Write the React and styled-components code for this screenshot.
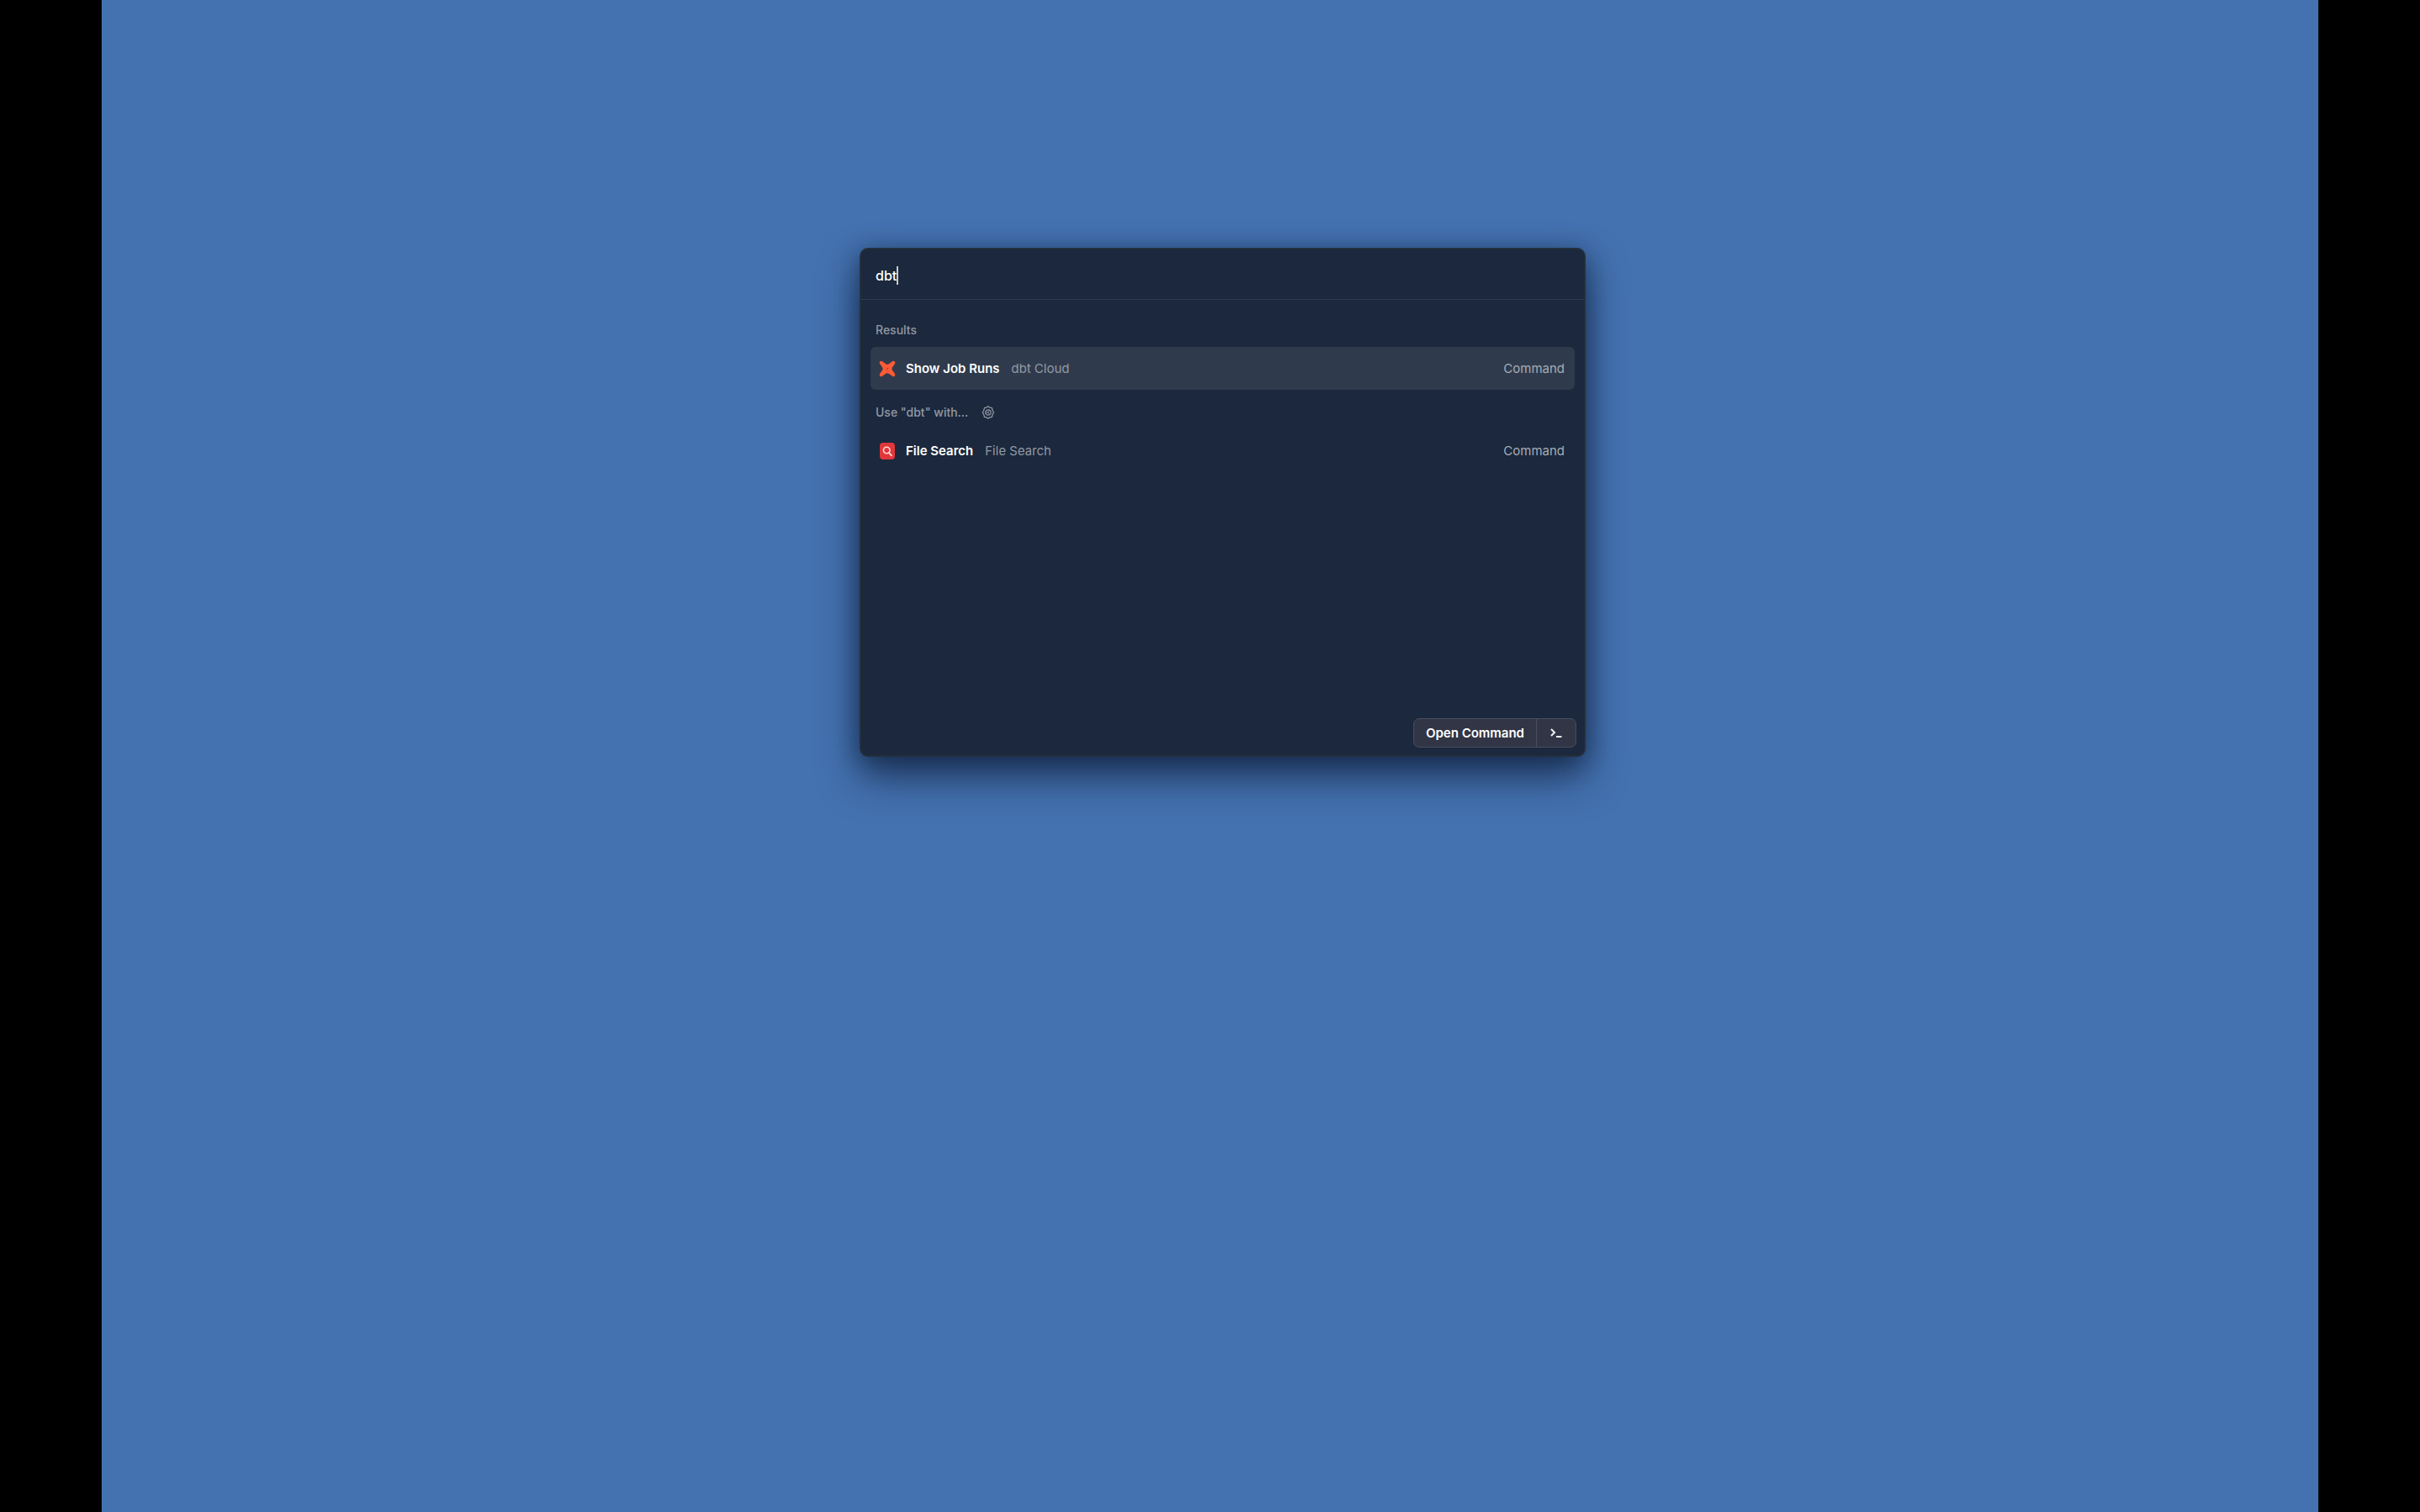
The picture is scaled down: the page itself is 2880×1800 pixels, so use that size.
import React, { useState } from 'react';
import styled, { createGlobalStyle } from 'styled-components';

const GlobalStyle = createGlobalStyle`
  * { box-sizing: border-box; }
  body {
    margin: 0;
    background: #000;
    font-family: Inter, Roboto, "Liberation Sans", sans-serif;
    font-size: 15px;
    line-height: 24px;
  }
  button, input { font: inherit; color: inherit; border: 0; background: none; padding: 0; }
`;

const Screen = styled.div`
  min-height: 100vh;
  padding: 0 121px;
  display: flex;
`;

const Desktop = styled.main`
  flex: 1;
  display: flex;
  justify-content: center;
  align-items: flex-start;
  padding: 295px 0 0 30px;
  background: #4472b0;
`;

const Launcher = styled.section`
  width: 30vw;
  min-height: 606px;
  display: flex;
  flex-direction: column;
  border-radius: 10px;
  border: 2px solid #242f3c;
  background: #1b283d;
  color: #fff;
  overflow: hidden;
  box-shadow: 0 24px 48px rgba(8, 20, 44, 0.62), 0 4px 28px rgba(8, 20, 44, 0.4);
`;

const SearchBar = styled.label`
  display: flex;
  align-items: center;
  height: 60px;
  padding: 2px 17px 0;
  border-bottom: 1px solid #303c4c;
`;

const SearchInput = styled.input`
  field-sizing: content;
  font-size: 16px;
  font-weight: 500;
  outline: none;
  caret-color: transparent;
`;

const Caret = styled.span`
  width: 2px;
  height: 22px;
  background: #c5cad2;
`;

const Results = styled.div`
  flex: 1;
  padding: 9px 11px 0;
`;

const GroupTitle = styled.h2`
  display: flex;
  align-items: center;
  gap: 16px;
  height: 47px;
  margin: 0;
  padding: 6px 6px 0;
  font-size: 14px;
  font-weight: 500;
  color: #9299a4;
`;

const IconButton = styled.button`
  display: flex;
`;

const Row = styled.button`
  display: flex;
  align-items: center;
  width: 100%;
  height: 51px;
  padding: 0 12px 0 10px;
  border-radius: 6px;
  text-align: left;
  background: ${(p) => (p.$selected ? '#2f3b4d' : 'transparent')};
`;

const RowTitle = styled.span`
  margin: 0 14px 0 12px;
  font-weight: 600;
`;

const Muted = styled.span`
  flex: ${(p) => (p.$grow ? 1 : 'none')};
  color: ${(p) => (p.$grow ? '#9299a4' : '#a6acb6')};
`;

const Footer = styled.footer`
  display: flex;
  justify-content: flex-end;
  padding: 9px;
`;

const Actions = styled.div`
  display: flex;
  height: 35px;
  border: 1px solid #494e5e;
  border-radius: 7px;
  background: #313545;
`;

const ActionButton = styled.button`
  display: flex;
  align-items: center;
  padding: ${(p) => (p.$compact ? '0 16px' : '0 14px')};
  font-weight: 600;
  & + & { border-left: 1px solid #494e5e; }
`;

const DbtIcon = () => (
  <svg width="20" height="20" viewBox="0 0 20 20" aria-hidden="true">
    <path
      d="M1 1.4Q2.2.2 3.8 1L8.2 4.2Q10 5.4 11.8 4.2L16.2 1Q17.8.2 19 1.4 19.8 2.6 19 4L16 8.2Q14.9 10 16 11.8L19 16Q19.8 17.6 18.7 18.8 17.5 19.7 16.2 19L11.8 15.8Q10 14.6 8.2 15.8L3.8 19Q2.5 19.7 1.3 18.8.2 17.6 1 16L4 11.8Q5.1 10 4 8.2L1 4Q.2 2.6 1 1.4Z"
      fill="#fa5a35"
    />
    <circle cx="10" cy="10" r="1.2" fill="#c94a30" />
  </svg>
);

const FileSearchIcon = () => (
  <svg width="20" height="20" viewBox="0 0 20 20" aria-hidden="true">
    <rect x="1" y="0" width="18" height="20" rx="4" fill="#e2373a" />
    <circle cx="9.2" cy="9" r="3.8" fill="none" stroke="#ffdede" strokeWidth="1.6" />
    <path d="M12 12l3 3.4" stroke="#ffdede" strokeWidth="1.8" strokeLinecap="round" />
  </svg>
);

const GearIcon = () => (
  <svg width="16" height="16" viewBox="0 0 16 16" fill="none" stroke="#8e96a1" aria-hidden="true">
    <path d="M8 .8l2 1.3 2.5.5.6 2.6L14.6 8l-1.5 2.8-.6 2.6-2.5.5-2 1.3-2-1.3-2.5-.5-.6-2.6L1.4 8l1.5-2.8.6-2.6L6 2.1z" strokeWidth="1.3" />
    <circle cx="8" cy="8" r="3.2" strokeWidth="1.2" />
    <path d="M8 8l1.6-2.6M8 8l1.6 2.6M8 8H5" strokeWidth="1" />
  </svg>
);

const PromptIcon = () => (
  <svg width="14" height="12" viewBox="0 0 14 12" fill="none" stroke="#eef0f4" strokeWidth="2" aria-hidden="true">
    <path d="M1 1l4 4-4 4M7 10h6.5" />
  </svg>
);

const ResultRow = ({ icon, title, source, selected }) => (
  <Row type="button" $selected={selected}>
    {icon}
    <RowTitle>{title}</RowTitle>
    <Muted $grow>{source}</Muted>
    <Muted>Command</Muted>
  </Row>
);

export default function App() {
  const [query, setQuery] = useState('dbt');
  return (
    <>
      <GlobalStyle />
      <Screen>
        <Desktop>
          <Launcher>
            <SearchBar>
              <SearchInput aria-label="Search" value={query} onChange={(e) => setQuery(e.target.value)} />
              <Caret />
            </SearchBar>
            <Results>
              <GroupTitle>Results</GroupTitle>
              <ResultRow icon={<DbtIcon />} title="Show Job Runs" source="dbt Cloud" selected />
              <GroupTitle>
                Use "{query}" with...
                <IconButton type="button" aria-label="Configure">
                  <GearIcon />
                </IconButton>
              </GroupTitle>
              <ResultRow icon={<FileSearchIcon />} title="File Search" source="File Search" />
            </Results>
            <Footer>
              <Actions>
                <ActionButton type="button">Open Command</ActionButton>
                <ActionButton type="button" $compact aria-label="Show actions">
                  <PromptIcon />
                </ActionButton>
              </Actions>
            </Footer>
          </Launcher>
        </Desktop>
      </Screen>
    </>
  );
}
